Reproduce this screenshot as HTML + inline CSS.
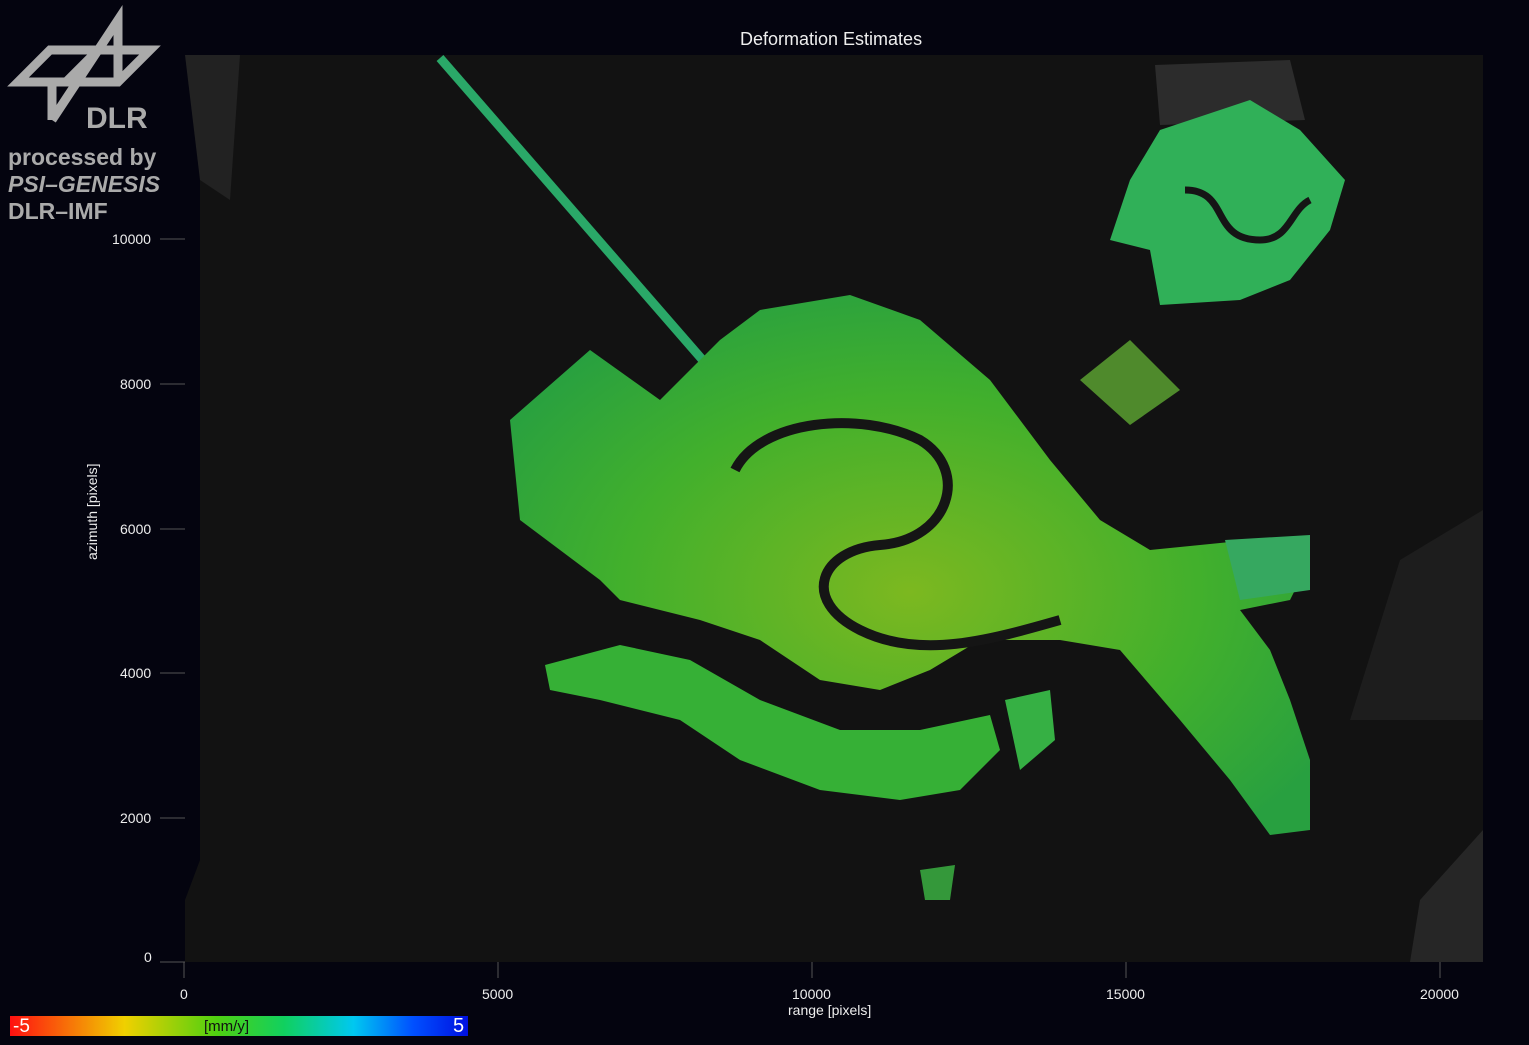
<!DOCTYPE html>
<html><head><meta charset="utf-8"><style>
html,body{margin:0;padding:0;background:#04040f;width:1529px;height:1045px;overflow:hidden;font-family:"Liberation Sans",sans-serif;color:#fff}
.t{position:absolute;font-size:14px;color:#eee}
.logo{position:absolute;left:8px;color:#aaa;font-weight:bold;font-size:23px;line-height:27px}
</style></head><body>
<svg width="1529" height="1045" style="position:absolute;left:0;top:0">
<defs>
<radialGradient id="g" cx="0.5" cy="0.55" r="0.6">
<stop offset="0" stop-color="#7cb820"/><stop offset="0.6" stop-color="#42b02c"/><stop offset="1" stop-color="#28a040"/>
</radialGradient>
<linearGradient id="cb" x1="0" x2="1">
<stop offset="0" stop-color="#ff1010"/><stop offset="0.25" stop-color="#f0d000"/><stop offset="0.45" stop-color="#50d010"/><stop offset="0.6" stop-color="#10d060"/><stop offset="0.75" stop-color="#00c8f0"/><stop offset="0.88" stop-color="#0050ff"/><stop offset="1" stop-color="#0010e0"/>
</linearGradient>
</defs>
<polygon points="200,55 1483,55 1483,962 185,962 185,900 200,860" fill="#121212"/>
<polygon points="185,55 240,55 230,200 200,180" fill="#222"/>
<polygon points="1155,65 1290,60 1305,120 1160,125" fill="#2c2c2c"/>
<polygon points="1400,560 1483,510 1483,720 1350,720" fill="#1d1d1d"/>
<polygon points="1420,900 1483,830 1483,962 1410,962" fill="#262626"/>
<line x1="440" y1="58" x2="720" y2="380" stroke="#2aa868" stroke-width="9"/>
<polygon fill="url(#g)" points="600,580 520,520 510,420 590,350 660,400 720,340 760,310 850,295 920,320 990,380 1050,460 1100,520 1150,550 1250,540 1310,560 1290,600 1240,610 1270,650 1290,700 1310,760 1310,830 1270,835 1230,780 1180,720 1120,650 1060,640 980,640 930,670 880,690 820,680 760,640 700,620 620,600"/>
<path d="M735,470 C760,420 860,410 920,440 C970,470 950,540 880,545 C820,550 800,600 860,630 C920,660 990,640 1060,620" stroke="#151515" stroke-width="10" fill="none"/>
<polygon fill="#36b036" points="545,665 620,645 690,660 760,700 840,730 920,730 990,715 1000,750 960,790 900,800 820,790 740,760 680,720 600,700 550,690"/>
<polygon fill="#36b044" points="1005,700 1050,690 1055,740 1020,770"/>
<polygon fill="#30b058" points="1130,180 1160,130 1250,100 1300,130 1345,180 1330,230 1290,280 1240,300 1160,305 1150,250 1110,240"/>
<path d="M1185,190 C1230,190 1210,240 1260,240 C1290,240 1290,210 1310,200" stroke="#151515" stroke-width="7" fill="none"/>
<polygon fill="#4f8a2c" points="1080,380 1130,340 1180,390 1130,425"/>
<polygon fill="#34983a" points="920,870 955,865 950,900 925,900"/>
<polygon fill="#36a860" points="1225,540 1310,535 1310,590 1240,600"/>
<rect x="10" y="1016" width="458" height="20" fill="url(#cb)"/>
<g stroke="#555" stroke-width="1">
<line x1="160" y1="239" x2="185" y2="239"/><line x1="160" y1="384" x2="185" y2="384"/><line x1="160" y1="529" x2="185" y2="529"/><line x1="160" y1="673" x2="185" y2="673"/><line x1="160" y1="818" x2="185" y2="818"/><line x1="160" y1="962" x2="185" y2="962"/>
<line x1="184" y1="962" x2="184" y2="978"/><line x1="498" y1="962" x2="498" y2="978"/><line x1="812" y1="962" x2="812" y2="978"/><line x1="1126" y1="962" x2="1126" y2="978"/><line x1="1440" y1="962" x2="1440" y2="978"/>
</g>
<g fill="none" stroke="#aaa" stroke-width="9">
<polygon points="18,82 50,50 150,50 118,82"/>
<line x1="66" y1="82" x2="98" y2="50"/>
<path d="M52,120 L52,82 M52,120 L118,20 L118,82"/>
</g>
</svg>
<div class="logo" style="top:105px;left:86px;font-size:30px">DLR</div>
<div class="logo" style="top:144px">processed by<br><i>PSI–GENESIS</i><br>DLR–IMF</div>
<div class="t" style="left:740px;top:29px;font-size:18px">Deformation Estimates</div>
<div class="t" style="left:112px;top:231px">10000</div>
<div class="t" style="left:120px;top:376px">8000</div>
<div class="t" style="left:120px;top:521px">6000</div>
<div class="t" style="left:120px;top:665px">4000</div>
<div class="t" style="left:120px;top:810px">2000</div>
<div class="t" style="left:144px;top:949px">0</div>
<div class="t" style="left:180px;top:986px">0</div>
<div class="t" style="left:482px;top:986px">5000</div>
<div class="t" style="left:792px;top:986px">10000</div>
<div class="t" style="left:1106px;top:986px">15000</div>
<div class="t" style="left:1420px;top:986px">20000</div>
<div class="t" style="left:788px;top:1002px">range [pixels]</div>
<div class="t" style="transform:rotate(-90deg);transform-origin:left top;top:560px;left:84px">azimuth [pixels]</div>
<div style="position:absolute;left:13px;top:1016px;font-size:19px;color:#fff">-5</div>
<div style="position:absolute;left:453px;top:1015px;font-size:20px;color:#fff">5</div>
<div style="position:absolute;left:204px;top:1018px;font-size:15px;color:#111">[mm/y]</div>
</body></html>
